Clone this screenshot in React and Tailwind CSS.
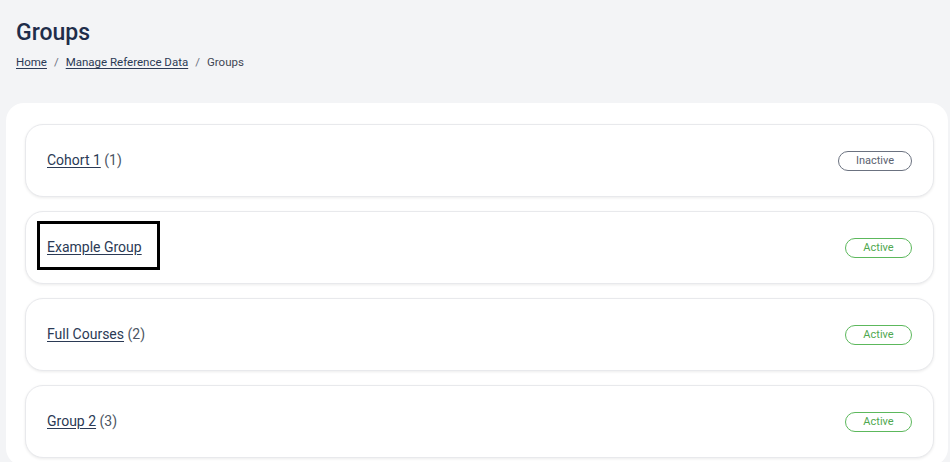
import React from 'react';

const groups = [
    { name: 'Cohort 1', count: 1, active: false },
    { name: 'Example Group', count: null, active: true, focused: true },
    { name: 'Full Courses', count: 2, active: true },
    { name: 'Group 2', count: 3, active: true },
];

const StatusBadge = ({ active }) => {
    if (active) {
        return (
            <span className="inline-flex h-[20px] w-[67px] items-center justify-center rounded-full border border-[#5cb85c] text-[11px] text-[#4fa84f]">
                Active
            </span>
        );
    }
    return (
        <span className="inline-flex h-[20px] w-[74px] items-center justify-center rounded-full border border-[#6b7280] text-[11px] text-[#5b6270]">
            Inactive
        </span>
    );
};

const GroupCard = ({ group }) => {
    return (
        <div className="flex h-[73px] items-center justify-between rounded-[18px] border border-[#e8e9ec] bg-white pl-[21px] pr-[21px] shadow-[0_1px_3px_rgba(0,0,0,0.08)]">
            <div className="text-[14px] text-[#4b5563]">
                <span className="relative">
                    <a href="#" className="text-[#2b3a55] underline underline-offset-2">
                        {group.name}
                    </a>
                    {group.focused && (
                        <span className="pointer-events-none absolute -bottom-[15px] -left-[10px] -right-[18px] -top-[18px] border-[3px] border-black"></span>
                    )}
                </span>
                {group.count !== null && <span> ({group.count})</span>}
            </div>
            <StatusBadge active={group.active} />
        </div>
    );
};

export default function App() {
    return (
        <div className="min-h-[462px] bg-[#f3f4f6] font-['Roboto',sans-serif]">
            {/* Page Header */}
            <div className="px-4 pt-[17px]">
                <h1 className="text-[23px] font-medium leading-8 text-[#1f2d4a]">Groups</h1>
                <nav className="mt-[5px] flex items-center text-[11.5px] text-[#3f4654]">
                    <a href="#" className="text-[#2b3a55] underline underline-offset-2">Home</a>
                    <span className="mx-[7px] text-[#6b7280]">/</span>
                    <a href="#" className="text-[#2b3a55] underline underline-offset-2">Manage Reference Data</a>
                    <span className="mx-[7px] text-[#6b7280]">/</span>
                    <span>Groups</span>
                </nav>
            </div>

            {/* Groups List */}
            <div className="ml-[6px] mr-[2px] mt-[32px] rounded-[18px] bg-white pb-[8px] pl-[19px] pr-[14px] pt-[21px]">
                <div className="flex flex-col gap-[14px]">
                    {groups.map(group => (
                        <GroupCard key={group.name} group={group} />
                    ))}
                </div>
            </div>
        </div>
    );
}
